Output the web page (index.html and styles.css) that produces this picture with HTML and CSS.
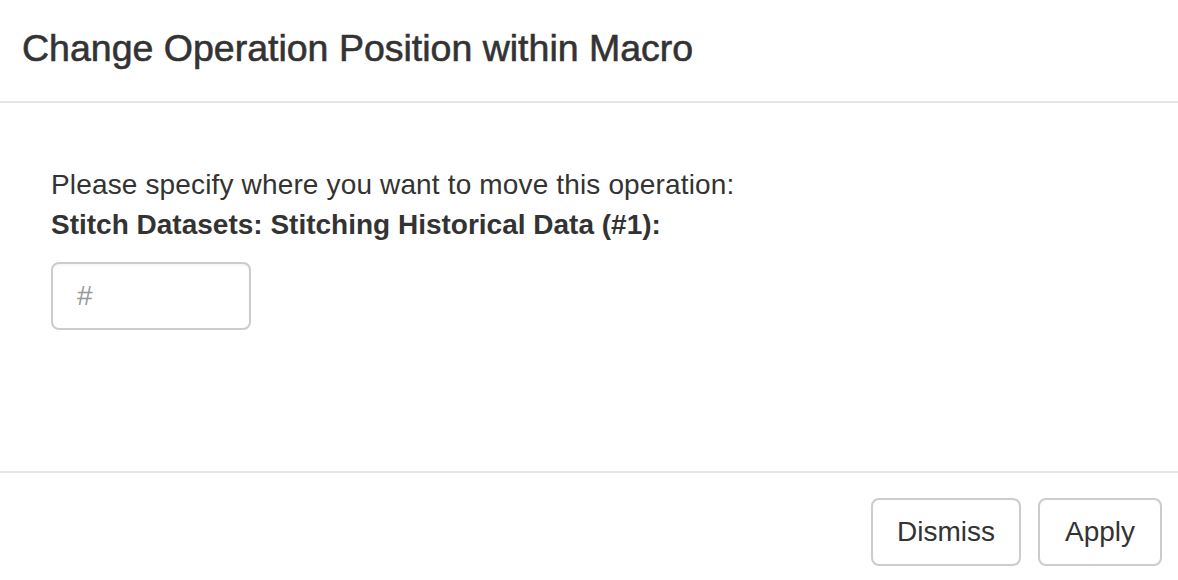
FILE: index.html
```html
<!DOCTYPE html>
<html lang="en">
<head>
<meta charset="utf-8">
<title>Change Operation Position within Macro</title>
<link rel="stylesheet" href="styles.css">
</head>
<body>
<div class="modal">
  <div class="modal-header">
    <h4 class="modal-title">Change Operation Position within Macro</h4>
  </div>
  <div class="modal-body">
    <p class="prompt">Please specify where you want to move this operation:<br><strong>Stitch Datasets: Stitching Historical Data (#1):</strong></p>
    <input class="pos-input" type="text" placeholder="#">
  </div>
  <div class="modal-footer">
    <button class="btn" type="button">Dismiss</button>
    <button class="btn" type="button">Apply</button>
  </div>
</div>
</body>
</html>
```

FILE: styles.css
```css
* { box-sizing: border-box; }
html, body {
  margin: 0;
  padding: 0;
  background: #fff;
}
body {
  font-family: "Liberation Sans", Arial, Helvetica, sans-serif;
  color: #333;
  font-size: 28px;
  line-height: 40px;
}
.modal {
  width: 1178px;
  height: 580px;
  display: flex;
  flex-direction: column;
}
.modal-header {
  height: 103px;
  border-bottom: 2px solid #e5e5e5;
  padding: 0 22px;
  display: flex;
  align-items: center;
}
.modal-title {
  margin: 0;
  font-size: 37.5px;
  line-height: 42px;
  font-weight: normal;
  color: #333;
  -webkit-text-stroke: 0.6px #333;
  padding-bottom: 6px;
}
.modal-body {
  height: 370px;
  border-bottom: 2px solid #e5e5e5;
  padding: 62px 51px 0;
}
.prompt {
  margin: 0 0 17px;
  letter-spacing: 0.15px;
}
.prompt strong {
  font-weight: bold;
  letter-spacing: 0;
}
.pos-input {
  display: block;
  width: 200px;
  height: 68px;
  border: 2px solid #ccc;
  border-radius: 8px;
  padding: 0 24px;
  font-family: inherit;
  font-size: 28px;
  color: #555;
  box-shadow: inset 0 2px 2px rgba(0,0,0,0.04);
  outline: none;
}
.pos-input::placeholder { color: #999; }
.modal-footer {
  flex: 1;
  display: flex;
  justify-content: flex-end;
  align-items: flex-start;
  gap: 17px;
  padding: 25px 16px 0;
}
.btn {
  height: 68px;
  padding: 0 24px;
  border: 2px solid #ccc;
  border-radius: 8px;
  background: #fff;
  color: #333;
  font-family: inherit;
  font-size: 28px;
  line-height: 40px;
}
.btn + .btn { padding: 0 25px; }
```
